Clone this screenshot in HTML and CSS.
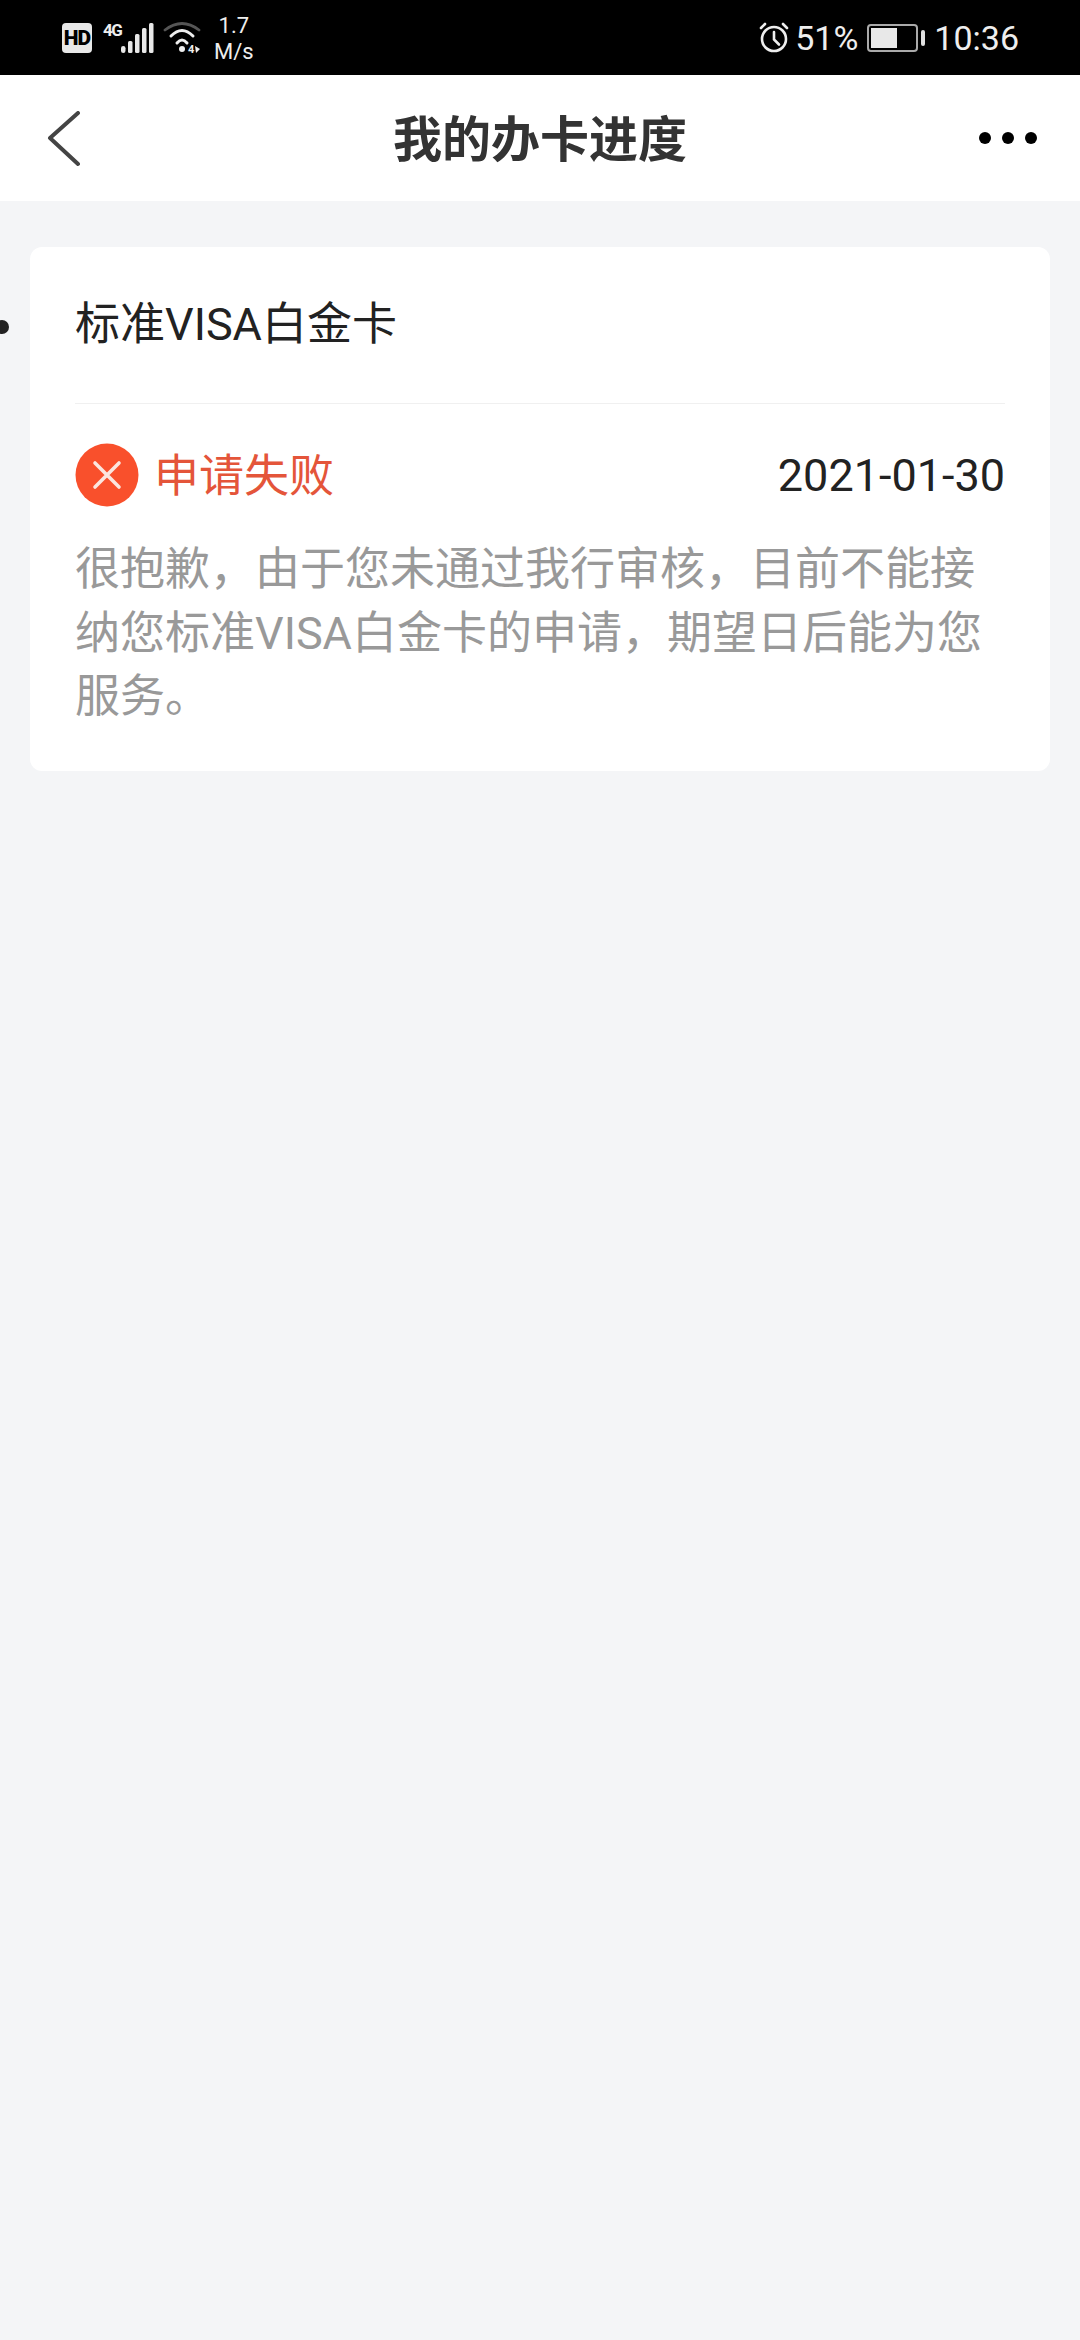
FILE: index.html
```html
<!DOCTYPE html>
<html lang="zh-CN">

<head>
    <meta charset="UTF-8">
    <meta name="viewport" content="width=device-width, initial-scale=1.0">
    <title>我的办卡进度</title>
    <link rel="stylesheet" href="styles.css">
</head>

<body>
    <div class="status-bar">
        <div class="status-left">
            <span class="hd-badge">HD</span>
            <div class="signal">
                <span class="signal-type">4G</span>
                <svg class="signal-bars" width="33" height="30" viewBox="0 0 33 30" fill="#e8e8e8">
                    <rect x="0" y="23" width="4.5" height="7" rx="2.2"></rect>
                    <rect x="7" y="18" width="4.5" height="12" rx="1.5"></rect>
                    <rect x="14" y="11" width="4.5" height="19" rx="1.5"></rect>
                    <rect x="21" y="5" width="4.5" height="25" rx="1.5"></rect>
                    <rect x="28" y="0" width="4.5" height="30" rx="1.5"></rect>
                </svg>
            </div>
            <svg class="wifi" width="38" height="32" viewBox="0 0 38 32" fill="none" stroke-linecap="round">
                <path d="M2 8 Q19 -5 36 8" stroke="#555" stroke-width="2.8"></path>
                <path d="M8 14 Q19 3 30 14" stroke="#eee" stroke-width="3"></path>
                <path d="M14 21 Q19 15 24 21" stroke="#eee" stroke-width="3"></path>
                <circle cx="19" cy="27" r="3" fill="#eee"></circle>
                <text class="wifi-version" x="25" y="31">4</text>
                <path d="M32 24 L37 27 L33 31 Z" fill="#eee"></path>
            </svg>
            <div class="net-speed">
                <span>1.7</span>
                <span>M/s</span>
            </div>
        </div>
        <div class="status-right">
            <svg class="alarm" width="32" height="32" viewBox="0 0 32 32" fill="none" stroke="#eee" stroke-linecap="round">
                <circle cx="16" cy="17" r="12" stroke-width="2.6"></circle>
                <path d="M16 10 V17.5 L21 22.5" stroke-width="2.6"></path>
                <path d="M3 6 L7 2 M29 6 L25 2" stroke-width="2.6"></path>
            </svg>
            <span class="battery-text">51%</span>
            <div class="battery">
                <div class="battery-body">
                    <div class="battery-level" style="width: 60%"></div>
                </div>
                <div class="battery-nub"></div>
            </div>
            <span class="clock">10:36</span>
        </div>
    </div>

    <div class="nav-bar">
        <svg class="nav-back" width="34" height="56" viewBox="0 0 34 56" fill="none" stroke="#444" stroke-width="4" stroke-linecap="round" stroke-linejoin="round">
            <path d="M31 2 L3 27 L31 53"></path>
        </svg>
        <h1 class="nav-title">我的办卡进度</h1>
        <div class="nav-more">
            <span></span>
            <span></span>
            <span></span>
        </div>
    </div>

    <div class="content">
        <div class="card">
            <div class="card-title">标准VISA白金卡</div>
            <div class="card-body">
                <div class="status-row">
                    <div class="status-label">
                        <svg class="fail-icon" width="64" height="64" viewBox="0 0 64 64">
                            <circle cx="32" cy="32" r="31.5" fill="#f9502c"></circle>
                            <path d="M20 20 L44 44 M44 20 L20 44" stroke="#fbe6df" stroke-width="3.6" stroke-linecap="round"></path>
                        </svg>
                        <span class="status-text">申请失败</span>
                    </div>
                    <span class="status-date">2021-01-30</span>
                </div>
                <p class="status-desc">很抱歉，由于您未通过我行审核，目前不能接纳您标准VISA白金卡的申请，期望日后能为您服务。</p>
            </div>
        </div>
    </div>
</body>

</html>
```

FILE: styles.css
```css
* {
    box-sizing: border-box;
}

body {
    font-family: Roboto, "Noto Sans CJK SC", sans-serif;
    background-color: #f4f5f7;
    margin: 0;
    padding: 0;
    height: 2340px;
    overflow: hidden;
}

.status-bar {
    height: 75px;
    background-color: #000;
    color: #eee;
    display: flex;
    justify-content: space-between;
    align-items: center;
    padding: 0 61px 0 62px;
}

.status-left,
.status-right {
    display: flex;
    align-items: center;
}

.hd-badge {
    width: 30px;
    height: 30px;
    margin-top: 1px;
    background-color: #e8e8e8;
    border-radius: 4px;
    color: #000;
    font-size: 21px;
    font-weight: 900;
    line-height: 30px;
    text-align: center;
    letter-spacing: -1px;
}

.signal {
    display: flex;
    margin-left: 11px;
    height: 30px;
}

.signal-type {
    width: 18px;
    font-size: 17px;
    font-weight: 700;
    line-height: 14px;
    letter-spacing: -1.5px;
}

.wifi {
    margin-left: 9px;
}

.wifi-version {
    fill: #eee;
    font-size: 11px;
    font-weight: 700;
}

.net-speed {
    display: flex;
    flex-direction: column;
    align-items: center;
    margin-left: 13px;
    margin-top: 2px;
    font-size: 22px;
    line-height: 26px;
}

.battery-text,
.clock {
    font-size: 34px;
    line-height: 40px;
}

.battery-text {
    margin-left: 5px;
}

.battery {
    display: flex;
    align-items: center;
    margin-left: 9px;
}

.battery-body {
    width: 51px;
    height: 28px;
    border: 2px solid #aaa;
    border-radius: 4px;
    padding: 2px;
}

.battery-level {
    height: 100%;
    background-color: #e8e8e8;
}

.battery-nub {
    width: 4px;
    height: 16px;
    margin-left: 3px;
    background-color: #e0e0e0;
    border-radius: 2px;
}

.clock {
    margin-left: 9px;
}

.nav-bar {
    height: 126px;
    background-color: #fff;
    display: flex;
    justify-content: space-between;
    align-items: center;
    padding: 0 43px 0 47px;
    position: relative;
}

.nav-back {
    margin-top: 1px;
}

.nav-title {
    position: absolute;
    left: 0;
    right: 0;
    margin: 0;
    padding-bottom: 6px;
    color: #333;
    font-size: 49px;
    font-weight: 700;
    text-align: center;
}

.nav-more {
    display: flex;
    gap: 11px;
}

.nav-more span {
    width: 12px;
    height: 12px;
    background-color: #000;
    border-radius: 50%;
}

.content {
    padding: 46px 30px 0;
}

.card {
    position: relative;
    background-color: #fff;
    border-radius: 12px;
    padding: 0 45px;
    height: 524px;
}

/* dot sticking out at the left of the card */
.card::before {
    content: "";
    position: absolute;
    left: -35px;
    top: 73px;
    width: 14px;
    height: 14px;
    background-color: #222;
    border-radius: 50%;
}

.card-title {
    height: 157px;
    border-bottom: 1px solid #f0f0f0;
    color: #222;
    font-size: 45px;
    line-height: 156px;
}

.card-body {
    padding-top: 36px;
}

.status-row {
    display: flex;
    justify-content: space-between;
    align-items: center;
}

.status-label {
    display: flex;
    align-items: center;
    gap: 15px;
}

.status-text {
    margin-bottom: 5px;
    color: #e4553a;
    font-size: 45px;
}

.status-date {
    color: #222;
    font-size: 45px;
}

.status-desc {
    margin: 28px 0 0;
    color: #999;
    font-size: 45px;
    line-height: 63.5px;
}
```
